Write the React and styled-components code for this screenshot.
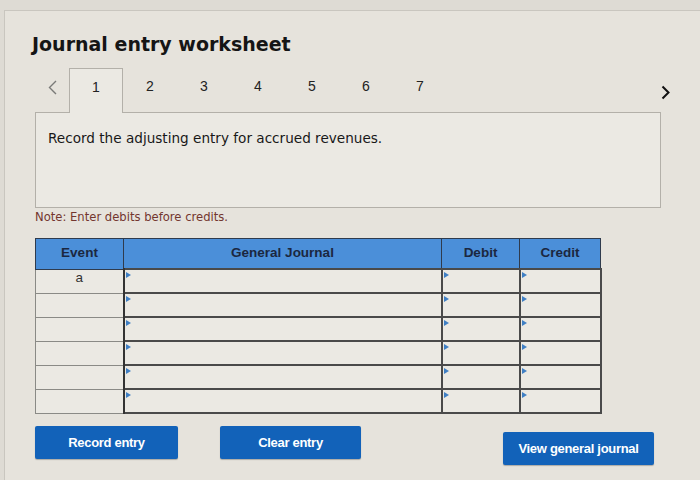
import React from "react";
import styled, { createGlobalStyle, css } from "styled-components";

const GlobalStyle = createGlobalStyle`
  html, body {
    margin: 0;
    padding: 0;
    background: #dedbd4;
  }
  body {
    width: 700px;
    height: 480px;
    overflow: hidden;
    font-family: "DejaVu Sans", Verdana, sans-serif;
  }
`;

const Card = styled.div`
  margin: 10px 0 0 4px;
  height: 470px;
  box-sizing: border-box;
  border-top: 1px solid #c9c6bf;
  border-left: 1px solid #c9c6bf;
  background: #e6e3dc;
  padding: 22px 0 0 30px;
`;

const Title = styled.h1`
  margin: 0 0 0 -3px;
  font-size: 19px;
  line-height: 22px;
  font-weight: 700;
  color: #151515;
`;

const TabRow = styled.div`
  display: flex;
  width: 640px;
  height: 44px;
  margin-top: 13px;
`;

const Chevron = styled.button`
  display: flex;
  align-items: flex-start;
  justify-content: center;
  width: 34px;
  padding: 12px 0 0;
  border: 0;
  background: none;
  ${({ $next }) =>
    $next &&
    css`
      margin-left: auto;
      width: 20px;
      padding-top: 17px;
    `}
`;

const Tab = styled.div`
  position: relative;
  width: 54px;
  box-sizing: border-box;
  text-align: center;
  padding-top: 10px;
  font-family: "Liberation Sans", Arial, sans-serif;
  font-size: 14px;
  color: #222;
  ${({ $active }) =>
    $active &&
    css`
      z-index: 1;
      height: 45px;
      border: 1px solid #b3b0a9;
      border-bottom: 0;
      background: #ebe9e3;
    `}
`;

const Prompt = styled.div`
  width: 626px;
  height: 96px;
  box-sizing: border-box;
  border: 1px solid #b3b0a9;
  background: #ebe9e3;
  padding: 17px 12px;
  font-size: 13.6px;
  color: #181818;
`;

const Note = styled.div`
  margin-top: 2px;
  font-size: 11.6px;
  line-height: 14px;
  color: #73362f;
`;

const Table = styled.table`
  margin-top: 14px;
  width: 565px;
  border-collapse: collapse;
  table-layout: fixed;
  font-family: "Liberation Sans", Arial, sans-serif;
  font-size: 13.5px;
`;

const Th = styled.th`
  height: 26px;
  padding: 0 0 3px;
  background: #4b8fd9;
  color: #1b2740;
  font-weight: 700;
  border: 1px solid #2f3b4d;
`;

const EventCell = styled.td`
  height: 22px;
  padding: 0;
  text-align: center;
  vertical-align: top;
  line-height: 16px;
  color: #333;
  background: #ebe9e3;
  border: 1px solid #8a8a86;
  border-right: 2px solid #333;
`;

const InputCell = styled.td`
  position: relative;
  height: 22px;
  padding: 0;
  background: #ebe9e3;
  border: 2px solid #4a4a4a;

  &::before {
    content: "";
    position: absolute;
    top: 2px;
    left: 1px;
    border-left: 5px solid #3f7fc4;
    border-top: 3px solid transparent;
    border-bottom: 3px solid transparent;
  }
`;

const Actions = styled.div`
  display: flex;
  width: 619px;
  margin-top: 12px;
  gap: 42px;
`;

const Button = styled.button`
  height: 33px;
  width: ${({ $w }) => $w}px;
  border: 0;
  border-radius: 2px;
  background: #1262b9;
  color: #fff;
  font-family: "Liberation Sans", Arial, sans-serif;
  font-weight: 700;
  font-size: 13px;
  letter-spacing: -0.3px;
  box-shadow: 0 1px 1px rgba(0, 0, 0, 0.25);
  ${({ $right }) =>
    $right &&
    css`
      margin-left: auto;
      margin-top: 6px;
    `}
`;

const LeftIcon = () => (
  <svg width="9" height="15" viewBox="0 0 9 15">
    <path d="M8 1L1.5 7.5L8 14" fill="none" stroke="#7a7a78" strokeWidth="1.4" />
  </svg>
);

const RightIcon = () => (
  <svg width="9" height="15" viewBox="0 0 9 15">
    <path d="M1.5 1.5L7.5 7.5L1.5 13.5" fill="none" stroke="#111" strokeWidth="2" />
  </svg>
);

const tabs = [1, 2, 3, 4, 5, 6, 7];
const rows = ["a", "", "", "", "", ""];

export default function App() {
  return (
    <>
      <GlobalStyle />
      <Card>
        <Title>Journal entry worksheet</Title>
        <TabRow>
          <Chevron aria-label="previous">
            <LeftIcon />
          </Chevron>
          {tabs.map((t) => (
            <Tab key={t} $active={t === 1}>
              {t}
            </Tab>
          ))}
          <Chevron $next aria-label="next">
            <RightIcon />
          </Chevron>
        </TabRow>
        <Prompt>Record the adjusting entry for accrued revenues.</Prompt>
        <Note>Note: Enter debits before credits.</Note>
        <Table>
          <colgroup>
            <col style={{ width: 88 }} />
            <col style={{ width: 318 }} />
            <col style={{ width: 78 }} />
            <col style={{ width: 81 }} />
          </colgroup>
          <thead>
            <tr>
              <Th>Event</Th>
              <Th>General Journal</Th>
              <Th>Debit</Th>
              <Th>Credit</Th>
            </tr>
          </thead>
          <tbody>
            {rows.map((r, i) => (
              <tr key={i}>
                <EventCell>{r}</EventCell>
                <InputCell />
                <InputCell />
                <InputCell />
              </tr>
            ))}
          </tbody>
        </Table>
        <Actions>
          <Button $w={143}>Record entry</Button>
          <Button $w={141}>Clear entry</Button>
          <Button $w={151} $right>
            View general journal
          </Button>
        </Actions>
      </Card>
    </>
  );
}
